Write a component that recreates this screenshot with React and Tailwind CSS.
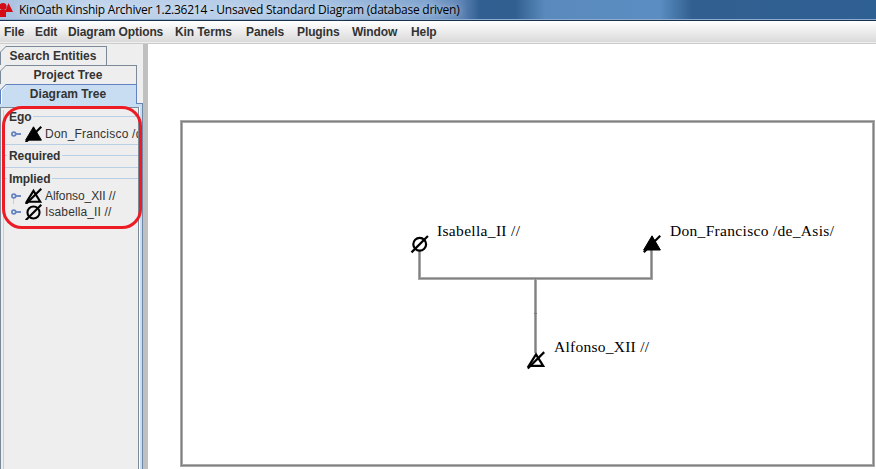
import React from "react";

const menus = [
  ["File", "w-[31px]"],
  ["Edit", "w-[33px]"],
  ["Diagram Options", "w-[107px]"],
  ["Kin Terms", "w-[71px]"],
  ["Panels", "w-[51px]"],
  ["Plugins", "w-[55px]"],
  ["Window", "w-[59px]"],
  ["Help", "w-[40px]"],
];

function AppIcon() {
  return (
    <svg className="h-[19px] w-[13px] shrink-0" viewBox="0 0 13 19" fill="#d60c14">
      <circle cx="3" cy="6.5" r="3.6" />
      <path d="M8.5 3 L13 12 H5 Z" />
      <rect x="0" y="10" width="6" height="7" />
    </svg>
  );
}

function KinSymbol({ kind, className }) {
  return (
    <svg className={className} width="17" height="17" viewBox="-9 -9 18 18">
      <SymbolShape kind={kind} />
    </svg>
  );
}

function SymbolShape({ kind }) {
  return (
    <g fill="none" stroke="#000" strokeWidth="2.2">
      {kind === "circle" && <circle r="6.4" />}
      {kind === "triangle" && <path d="M0 -6 L7.2 5.6 H-7.2 Z" />}
      {kind === "solid" && <path d="M0 -8.2 L8.4 6 H-8.4 Z" fill="#000" strokeWidth="1" />}
      <path d="M-8.2 8.2 L8.2 -8.2" />
    </g>
  );
}

function Tab({ label, active, className }) {
  const line = active ? "#5b80bd" : "#7a8a99";
  return (
    <div
      className={`relative h-[19px] shrink-0 border-t border-r text-center text-[12px] leading-[18px] font-bold tracking-[0.02px] ${active ? "border-[#6382bf] bg-[#c8ddf2]" : "border-[#7a8a99] bg-[#eee]"} ${className}`}
    >
      <svg className="absolute -top-px left-0" width="7" height="20" viewBox="0 0 7 20">
        <path d="M0 0H6L0 6Z" fill="#eee" />
        <path d="M0.5 20V6L6 0.5H7" fill="none" stroke={line} />
        {active && <path d="M1.5 20V6.5L6.5 1.5" fill="none" stroke="#fff" />}
      </svg>
      {label}
    </div>
  );
}

function Section({ title, className }) {
  return (
    <div className={`flex h-[14px] items-center text-[12px] leading-[14px] font-bold tracking-[-0.08px] ${className}`}>
      <span className="mr-[2px] mb-[2px] h-px w-[2px] bg-[#b8cfe5]" />
      <span>{title}</span>
      <span className="mb-[2px] ml-[2px] h-px flex-1 bg-[#b8cfe5]" />
    </div>
  );
}

function TreeRow({ kind, label, linked, tracking }) {
  return (
    <div className="flex h-4 items-center overflow-hidden text-[12px] leading-4 whitespace-nowrap">
      <svg className="ml-[6px] shrink-0" width="11" height="16" viewBox="0 0 11 16">
        {linked && <path d="M2.5 8V16" stroke="#b8cfe5" />}
        <circle cx="2.8" cy="8" r="1.9" fill="#eef5fd" stroke="#6382bf" strokeWidth="1.7" />
        <path d="M5 8H10" stroke="#6382bf" strokeWidth="1.8" />
      </svg>
      <KinSymbol kind={kind} className="ml-[3px] shrink-0" />
      <span className={`ml-[3px] ${tracking}`}>{label}</span>
    </div>
  );
}

function Diagram() {
  const nodes = [
    { kind: "circle", x: 419.7, y: 244.2, tx: 437, ty: 236, label: "Isabella_II //", w: 83 },
    { kind: "solid", x: 652, y: 244, tx: 670, ty: 236, label: "Don_Francisco /de_Asis/", w: 164 },
    { kind: "triangle", x: 536, y: 360.3, tx: 554, ty: 352, label: "Alfonso_XII //", w: 95 },
  ];
  return (
    <svg className="block h-[425px] w-[728px]" viewBox="148 44 728 425">
      <rect x="181.5" y="121.5" width="692" height="344" fill="none" stroke="#aaa" strokeWidth="3" />
      <rect x="181.5" y="121.5" width="692" height="344" fill="none" stroke="#808080" />
      <path d="M419.5 251V278.5H651.5V250M535.5 278.5V353" fill="none" stroke="#aaa" strokeWidth="3" />
      <path d="M419.5 251V278.5H651.5V250M535.5 278.5V353" fill="none" stroke="#808080" strokeWidth="1.2" />
      <path d="M534 313.5h3" stroke="#777" />
      {nodes.map((n) => (
        <g key={n.label}>
          <g transform={`translate(${n.x} ${n.y})`}>
            <SymbolShape kind={n.kind} />
          </g>
          <text x={n.tx} y={n.ty} textLength={n.w} className="font-['Liberation_Serif',serif] text-[15.5px]" fill="#000">
            {n.label}
          </text>
        </g>
      ))}
    </svg>
  );
}

export default function App() {
  return (
    <div className="flex h-[469px] w-[876px] flex-col overflow-hidden bg-white font-['Liberation_Sans',Arial,sans-serif] text-[#333]">
      <header className="flex h-[21px] shrink-0 items-start border-b border-[#17314d] bg-[linear-gradient(90deg,#a9c1df_0,#c0d4ec_90px,#b5cce8_240px,#a2bfe0_330px,#7fa3cf_430px,#5b82b3_462px,#315f91_480px,#315f8f_515px,#5a8abd_545px,#5b8dc2_660px,#315f8f_692px,#2f6094_876px)] shadow-[inset_0_-1px_0_#8dadd0]">
        <AppIcon />
        <h1 className="ml-[6px] font-['Open_Sans','Noto_Sans',sans-serif] text-[12px] leading-[19px] tracking-[-0.25px] whitespace-nowrap text-black [text-shadow:0_0_7px_#ffffffcc]">
          KinOath Kinship Archiver 1.2.36214 - Unsaved Standard Diagram (database driven)
        </h1>
      </header>
      <nav className="flex h-[23px] shrink-0 border-b border-[#ccc] bg-[linear-gradient(#fff,#dadada_21px,#eee_21px)] pl-[4px] text-[12px] leading-[22px] font-bold tracking-[-0.1px] whitespace-nowrap">
        {menus.map(([label, width]) => (
          <span key={label} className={width}>{label}</span>
        ))}
      </nav>
      <main className="flex h-[425px]">
        <aside className="relative flex w-[143px] shrink-0 flex-col bg-[#eee] pt-[2px]">
          <Tab label="Search Entities" className="w-[107px]" />
          <Tab label="Project Tree" className="w-[137px]" />
          <Tab label="Diagram Tree" active className="w-[137px]" />
          <div className="flex flex-1 flex-col border-r border-[#6f88a8] bg-[#c8ddf2] pr-[3px]">
            <div className="-mr-[3px] ml-[136px] h-px bg-[#6382bf]" />
            <div className="h-[3px]" />
            <div className="flex-1 border-t border-r border-l border-[#7a8a99] bg-[#eee] pt-[2px] shadow-[1px_0_0_#fff]">
              <div className="ml-[2px] h-full border-l border-[#c3d0e0] pl-px">
                <Section title="Ego" />
                <div className="mt-[2px]">
                  <TreeRow kind="solid" label="Don_Francisco /de_Asis/" tracking="tracking-[0.22px]" />
                </div>
                <div className="mt-[2px] h-px bg-[#b8cfe5]" />
                <Section title="Required" className="mt-[4px]" />
                <div className="mt-[4px] h-px bg-[#b8cfe5]" />
                <Section title="Implied" className="mt-[4px]" />
                <div className="mt-[2px]">
                  <TreeRow kind="triangle" label="Alfonso_XII //" linked tracking="tracking-[-0.07px]" />
                  <TreeRow kind="circle" label="Isabella_II //" tracking="tracking-[0.12px]" />
                </div>
              </div>
            </div>
          </div>
          <div className="absolute top-[62px] left-[2px] h-[123px] w-[140px] rounded-[20px] border-3 border-[#ed1c24]" />
        </aside>
        <div className="w-[5px] shrink-0 bg-[#c0c0c0]" />
        <Diagram />
      </main>
    </div>
  );
}
